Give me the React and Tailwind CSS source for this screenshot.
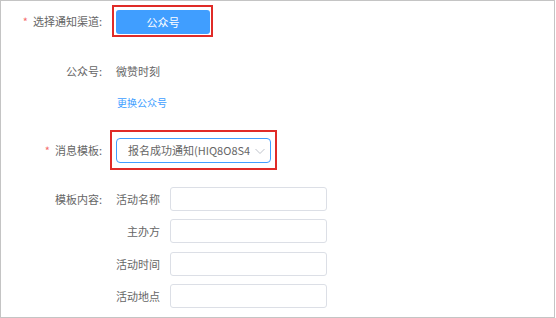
export default function App() {
  const font = { fontFamily: '"Noto Sans CJK SC", "Noto Sans", sans-serif' };
  const Input = () => (
    <div className="ml-[10px] w-[157px] h-[24px] border border-[#dcdfe6] rounded-[3px] bg-white" />
  );
  return (
    <div className="w-[556px] h-[318px] bg-white" style={font}>
      <div className="w-[555px] h-[318px] border border-[#c4c4c4] text-[11px] text-[#666666]">
        {/* row 1 */}
        <div className="mt-[4px] h-[32px] flex items-center">
          <div className="w-[101px] shrink-0 text-right">
            <span className="text-[#f56c6c] mr-[5px]">*</span>选择通知渠道:
          </div>
          <div className="ml-[10px] border-2 border-[#e02b27] pl-[2px] pr-[1px] pt-[3px] pb-[1px]">
            <div className="w-[94px] h-[24px] rounded-[3px] bg-[#409eff] text-white text-[11px] flex items-center justify-center">
              公众号
            </div>
          </div>
        </div>
        {/* row 2 */}
        <div className="mt-[24px] h-[20px] flex items-center">
          <div className="w-[101px] shrink-0 text-right">公众号:</div>
          <div className="ml-[14px]">微赞时刻</div>
        </div>
        {/* row 3 */}
        <div className="mt-[11px] h-[20px] flex items-center">
          <div className="w-[101px] shrink-0" />
          <div className="ml-[15px] text-[10px] text-[#409eff]">更换公众号</div>
        </div>
        {/* row 4 */}
        <div className="mt-[18px] h-[40px] flex items-center">
          <div className="w-[101px] shrink-0 text-right">
            <span className="text-[#f56c6c] mr-[5px]">*</span>消息模板:
          </div>
          <div className="ml-[8px] border-2 border-[#e02b27] pl-[4px] pr-[4px] pt-[6px] pb-[5px]">
            <div className="w-[155px] h-[25px] rounded-[4px] border border-[#409eff] flex items-center pl-[11px] pr-[4px]">
              <div className="w-[122px] overflow-hidden whitespace-nowrap">报名成功通知(HIQ8O8S4(</div>
              <svg className="ml-auto" width="12" height="10" viewBox="0 0 12 10">
                <path d="M1.5 3 L6 7.5 L10.5 3" fill="none" stroke="#c0c4cc" strokeWidth="1" />
              </svg>
            </div>
          </div>
        </div>
        {/* template rows */}
        <div className="mt-[17px] h-[24px] flex items-center">
          <div className="w-[101px] shrink-0 text-right">模板内容:</div>
          <div className="w-[58px] shrink-0 text-right">活动名称</div>
          <Input />
        </div>
        <div className="mt-[8px] h-[24px] flex items-center">
          <div className="w-[101px] shrink-0" />
          <div className="w-[58px] shrink-0 text-right">主办方</div>
          <Input />
        </div>
        <div className="mt-[9px] h-[24px] flex items-center">
          <div className="w-[101px] shrink-0" />
          <div className="w-[58px] shrink-0 text-right">活动时间</div>
          <Input />
        </div>
        <div className="mt-[8px] h-[24px] flex items-center">
          <div className="w-[101px] shrink-0" />
          <div className="w-[58px] shrink-0 text-right">活动地点</div>
          <Input />
        </div>
      </div>
    </div>
  );
}
